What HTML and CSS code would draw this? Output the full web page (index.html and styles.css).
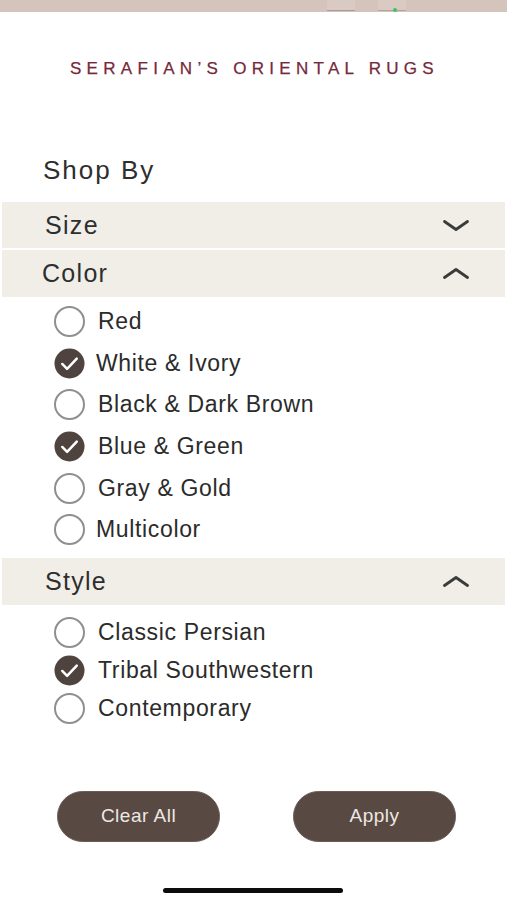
FILE: index.html
```html
<!DOCTYPE html>
<html lang="en">
<head>
<meta charset="utf-8">
<title>Serafian's Oriental Rugs - Shop By</title>
<link rel="stylesheet" href="styles.css">
</head>
<body>
<div class="statusbar">
  <span class="sb-item"></span>
  <span class="sb-item sb-item2"><span class="sb-dot"></span></span>
</div>
<header class="brand">SERAFIAN’S ORIENTAL RUGS</header>
<h1 class="shopby">Shop By</h1>

<section class="group">
  <div class="band">
    <span class="band-title">Size</span>
    <svg class="chev" viewBox="0 0 26 11" width="26" height="11"><polyline points="1.5,1.5 13,9.5 24.5,1.5"/></svg>
  </div>
</section>

<section class="group">
  <div class="band band-tight">
    <span class="band-title">Color</span>
    <svg class="chev" viewBox="0 0 26 11" width="26" height="11"><polyline points="1.5,9.5 13,1.5 24.5,9.5"/></svg>
  </div>
  <ul class="opts opts-color">
    <li class="opt"><span class="radio"></span><span class="lbl">Red</span></li>
    <li class="opt"><svg class="check" viewBox="0 0 32 32" width="32" height="32"><circle cx="16" cy="16" r="15.5"/><polyline points="8.5,16.5 13.5,21.5 23.5,11"/></svg><span class="lbl lbl-c">White &amp; Ivory</span></li>
    <li class="opt"><span class="radio"></span><span class="lbl">Black &amp; Dark Brown</span></li>
    <li class="opt"><svg class="check" viewBox="0 0 32 32" width="32" height="32"><circle cx="16" cy="16" r="15.5"/><polyline points="8.5,16.5 13.5,21.5 23.5,11"/></svg><span class="lbl">Blue &amp; Green</span></li>
    <li class="opt"><span class="radio"></span><span class="lbl">Gray &amp; Gold</span></li>
    <li class="opt"><span class="radio"></span><span class="lbl lbl-c">Multicolor</span></li>
  </ul>
</section>

<section class="group">
  <div class="band band-style">
    <span class="band-title">Style</span>
    <svg class="chev" viewBox="0 0 26 11" width="26" height="11"><polyline points="1.5,9.5 13,1.5 24.5,9.5"/></svg>
  </div>
  <ul class="opts opts-style">
    <li class="opt"><span class="radio"></span><span class="lbl">Classic Persian</span></li>
    <li class="opt"><svg class="check" viewBox="0 0 32 32" width="32" height="32"><circle cx="16" cy="16" r="15.5"/><polyline points="8.5,16.5 13.5,21.5 23.5,11"/></svg><span class="lbl">Tribal Southwestern</span></li>
    <li class="opt"><span class="radio"></span><span class="lbl">Contemporary</span></li>
  </ul>
</section>

<div class="actions">
  <button class="btn" type="button">Clear All</button>
  <button class="btn" type="button">Apply</button>
</div>
<div class="home"><span class="home-bar"></span></div>
</body>
</html>
```

FILE: styles.css
```css
* { box-sizing: border-box; }
html, body { margin: 0; padding: 0; }
body {
  width: 507px;
  height: 900px;
  background: #ffffff;
  font-family: "Liberation Sans", Arial, Helvetica, sans-serif;
  color: #2e2e2e;
  overflow: hidden;
}

.statusbar {
  height: 12px;
  background: #d5c4bc;
  display: flex;
  padding-left: 327px;
  gap: 23px;
}
.sb-item {
  width: 28px;
  height: 11px;
  background: #d9cbc4;
  border-bottom: 1px solid #a99a92;
  position: relative;
}
.sb-item2 { border-bottom-color: #b3a59e; }
.sb-dot {
  position: absolute;
  left: 15px;
  bottom: -2px;
  width: 4px;
  height: 4px;
  border-radius: 50%;
  background: #3fc35a;
}

.brand {
  margin-top: 47px;
  height: 20px;
  line-height: 20px;
  font-size: 17px;
  letter-spacing: 5.3px;
  padding-left: 2px;
  text-align: center;
  color: #76283a;
  -webkit-text-stroke: 0.25px #76283a;
  white-space: nowrap;
}

.shopby {
  margin: 76px 0 0 0;
  padding-left: 43px;
  font-size: 26px;
  line-height: 30px;
  font-weight: normal;
  letter-spacing: 2px;
  color: #2e2e2e;
}

.shopby + .group { margin-top: 17px; }

.band {
  margin: 0 2px;
  height: 46px;
  background: #f1eee8;
  display: flex;
  align-items: center;
  justify-content: space-between;
  padding: 0 36px 0 43px;
}
.band-tight { margin-top: 2px; height: 47px; padding-left: 40px; }
.band-style { margin-top: 7px; height: 47px; padding-left: 43px; }

.band-title {
  font-size: 25px;
  letter-spacing: 1.3px;
  color: #2e2e2e;
}
.chev {
  display: block;
  fill: none;
  stroke: #3b3b3b;
  stroke-width: 2.8;
  stroke-linecap: round;
  stroke-linejoin: round;
}

.opts {
  list-style: none;
  margin: 0;
  padding: 4px 0 0 54px;
}
.opts-style { padding-top: 9px; }
.opt {
  display: flex;
  align-items: center;
  height: 41.6px;
}
.opts-style .opt { height: 38px; }

.radio {
  width: 31px;
  height: 31px;
  flex: none;
  border: 2px solid #8f8f8f;
  border-radius: 50%;
  background: #ffffff;
}
.check {
  flex: none;
  width: 31px;
  height: 31px;
  display: block;
}
.check circle { fill: #4e433f; }
.check polyline {
  fill: none;
  stroke: #ffffff;
  stroke-width: 2.6;
  stroke-linecap: round;
  stroke-linejoin: round;
}
.lbl {
  margin-left: 13px;
  font-size: 23px;
  letter-spacing: 0.65px;
  color: #2b2b2b;
  white-space: nowrap;
}
.lbl-c { margin-left: 11px; }

.actions {
  display: flex;
  gap: 73px;
  padding-left: 57px;
  margin-top: 63px;
}
.btn {
  width: 163px;
  height: 51px;
  border-radius: 26px;
  border: 1px solid #6a5d56;
  background: #584a43;
  color: #eee8e3;
  font-family: "Liberation Sans", Arial, Helvetica, sans-serif;
  font-size: 19px;
  letter-spacing: 0.5px;
  padding: 0;
  cursor: pointer;
}

.home {
  display: flex;
  justify-content: center;
  margin-top: 46px;
  padding-right: 1px;
}
.home-bar {
  width: 180px;
  height: 5px;
  border-radius: 3px;
  background: #0c0c0c;
}
```
